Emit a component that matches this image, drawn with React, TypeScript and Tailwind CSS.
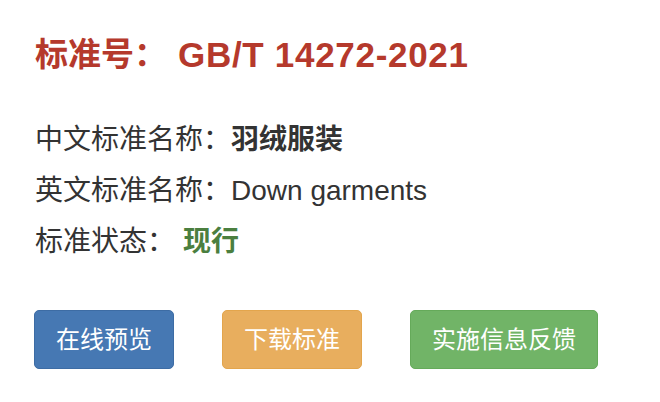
const font = {
  fontFamily: '"Liberation Sans", "Noto Sans CJK SC", sans-serif',
};

function Field({ label, children }: { label: string; children: React.ReactNode }) {
  return (
    <div className="flex items-center h-[51px] text-[28px] text-[#333333]">
      <span>{label}</span>
      {children}
    </div>
  );
}

const buttons = [
  { text: "在线预览", cls: "bg-[#4678b3] border-[#3d6ca4]" },
  { text: "下载标准", cls: "bg-[#e8ae5e] border-[#e3a54c]" },
  { text: "实施信息反馈", cls: "bg-[#71b467] border-[#65aa5a]" },
];

export default function App() {
  return (
    <div className="w-[660px] h-[402px] bg-white pl-[35px] pt-[34px]" style={font}>
      <h1 className="flex items-center h-[40px] text-[33px] font-bold text-[#b5392c] leading-none">
        <span>标准号：</span>
        <span className="ml-[11px] text-[35px] tracking-[0.7px]">GB/T 14272-2021</span>
      </h1>

      <div className="mt-[40px] flex flex-col">
        <Field label="中文标准名称：">
          <span className="font-bold">羽绒服装</span>
        </Field>
        <Field label="英文标准名称：">
          <span>Down garments</span>
        </Field>
        <Field label="标准状态：">
          <span className="ml-[8px] font-bold text-[#4b7f3f]">现行</span>
        </Field>
      </div>

      <div className="mt-[43px] flex gap-[48px] -ml-[1px]">
        {buttons.map((b) => (
          <button
            key={b.text}
            className={`h-[59px] px-[21px] rounded-[5px] border text-white text-[24px] leading-none ${b.cls}`}
          >
            {b.text}
          </button>
        ))}
      </div>
    </div>
  );
}
